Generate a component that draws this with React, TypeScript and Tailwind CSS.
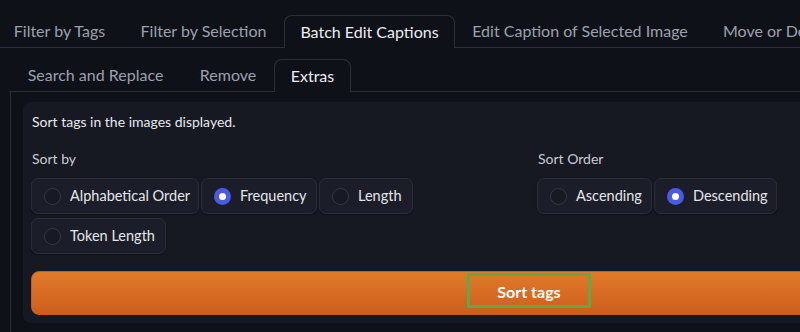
import React from "react";

const font = { fontFamily: "Lato, 'Noto Sans', sans-serif" };

function Radio({ label, checked, w }: { label: string; checked?: boolean; w: string }) {
  return (
    <div
      className={`${w} h-[36px] flex items-center pl-[12px] gap-[9px] rounded-[7px] border border-[#2b2e39] bg-[#1b1e28] shadow-[0_1px_2px_rgba(0,0,0,0.3)]`}
    >
      {checked ? (
        <span className="w-[17px] h-[17px] rounded-full bg-[#4b5ae6] flex items-center justify-center shrink-0">
          <span className="w-[7px] h-[7px] rounded-full bg-white" />
        </span>
      ) : (
        <span className="w-[17px] h-[17px] rounded-full border border-[#353946] bg-[#171a23] shrink-0" />
      )}
      <span className="text-[14.5px] text-[#e4e6ea] leading-[20px] whitespace-nowrap">{label}</span>
    </div>
  );
}

export default function App() {
  return (
    <div className="w-[800px] h-[332px] overflow-hidden bg-[#0f1118]" style={font}>
      <div className="w-[1058px]">
        {/* outer tabs */}
        <div className="pt-[15px] flex border-b border-[#2c2f3a] -ml-1">
          <div className="w-[127px] h-[32px] flex items-center justify-center text-[16px] text-[#9ba1ad] whitespace-nowrap">
            Filter by Tags
          </div>
          <div className="w-[161px] h-[32px] flex items-center justify-center text-[16px] text-[#9ba1ad] whitespace-nowrap">
            Filter by Selection
          </div>
          <div className="w-[171px] h-[33px] -mb-px flex items-center justify-center text-[16px] text-[#eceef2] whitespace-nowrap border border-b-0 border-[#2c2f3a] rounded-t-[8px] bg-[#0f1118]">
            Batch Edit Captions
          </div>
          <div className="w-[250px] h-[32px] flex items-center justify-center text-[16px] text-[#9ba1ad] whitespace-nowrap">
            Edit Caption of Selected Image
          </div>
          <div className="h-[32px] flex items-center pl-[18px] text-[16px] text-[#9ba1ad] whitespace-nowrap">
            Move or Delete Files
          </div>
        </div>

        {/* inner tabs */}
        <div className="ml-[10px] w-[1038px] mt-[11px]">
          <div className="flex border-b border-[#2c2f3a] -ml-px">
            <div className="w-[173px] h-[32px] flex items-center justify-center text-[16px] text-[#9ba1ad] whitespace-nowrap">
              Search and Replace
            </div>
            <div className="w-[92px] h-[32px] flex items-center justify-center text-[16px] text-[#9ba1ad] whitespace-nowrap">
              Remove
            </div>
            <div className="w-[77px] h-[33px] -mb-px flex items-center justify-center text-[16px] text-[#eceef2] whitespace-nowrap border border-b-0 border-[#2c2f3a] rounded-t-[8px] bg-[#0f1118]">
              Extras
            </div>
          </div>
          <div className="border-l border-r border-[#2c2f3a] px-[12px] pt-[10px] h-[300px]">
            <div className="rounded-[8px] bg-[#161822] px-[8px] pt-[10px] pb-[8px]">
              <div className="text-[14px] leading-[20px] text-[#e8eaee] pl-px">Sort tags in the images displayed.</div>
              <div className="grid grid-cols-2 gap-4 mt-[17px]">
                <div>
                  <div className="text-[14px] leading-[20px] text-[#c9ccd3] pl-px">Sort by</div>
                  <div className="mt-[9px] flex flex-col gap-[4px]">
                    <div className="flex gap-[2px]">
                      <Radio label="Alphabetical Order" w="w-[168px]" />
                      <Radio label="Frequency" checked w="w-[116px]" />
                      <Radio label="Length" w="w-[94px]" />
                    </div>
                    <div className="flex">
                      <Radio label="Token Length" w="w-[135px]" />
                    </div>
                  </div>
                </div>
                <div>
                  <div className="text-[14px] leading-[20px] text-[#c9ccd3] pl-px">Sort Order</div>
                  <div className="mt-[9px] flex gap-[2px]">
                    <Radio label="Ascending" w="w-[115px]" />
                    <Radio label="Descending" checked w="w-[123px]" />
                  </div>
                </div>
              </div>
              <button className="mt-[17px] w-full h-[44px] rounded-[8px] border border-[#c85a1a] bg-gradient-to-b from-[#e07a2a] to-[#cd5e1d] flex justify-center items-start pt-[1px]">
                <span className="w-[124px] h-[35px] border-[3px] border-[#5ea94b] block pt-[6px] text-[16px] leading-[20px] font-bold text-white text-center">
                  Sort tags
                </span>
              </button>
            </div>
          </div>
        </div>
      </div>
    </div>
  );
}
